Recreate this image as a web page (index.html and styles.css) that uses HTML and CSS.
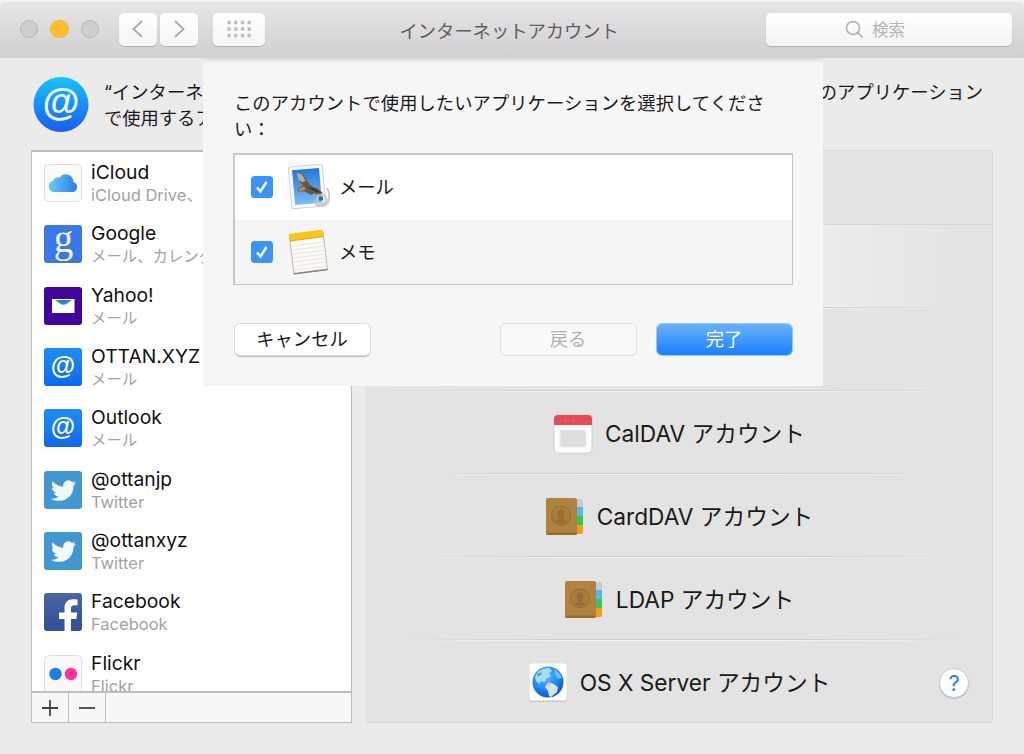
FILE: index.html
```html
<!DOCTYPE html>
<html lang="ja">
<head>
<meta charset="utf-8">
<title>インターネットアカウント</title>
<link rel="stylesheet" href="styles.css">
</head>
<body>
<svg width="0" height="0" class="defs">
  <defs>
    <linearGradient id="blue" x1="0" y1="0" x2="0" y2="1"><stop offset="0" stop-color="#14c4fb"/><stop offset="1" stop-color="#1c5cf0"/></linearGradient>
    <linearGradient id="mail" x1="0" y1="0" x2="0" y2="1"><stop offset="0" stop-color="#1c8df6"/><stop offset="1" stop-color="#1068ee"/></linearGradient>
    <linearGradient id="cloud"><stop offset="0" stop-color="#6cc8f8"/><stop offset="1" stop-color="#2a7fe6"/></linearGradient>
    <linearGradient id="sky" x1="0" y1="0" x2="0" y2="1"><stop offset="0" stop-color="#2176d8"/><stop offset="1" stop-color="#7dbdf0"/></linearGradient>
    <linearGradient id="fb" x1="0" y1="0" x2="0" y2="1"><stop offset="0" stop-color="#4a65a3"/><stop offset="1" stop-color="#2f4f97"/></linearGradient>
    <radialGradient id="sea" cx=".4" cy=".3" r=".75"><stop offset="0" stop-color="#5cc4ff"/><stop offset=".6" stop-color="#1b86ee"/><stop offset="1" stop-color="#0b50bd"/></radialGradient>
    <symbol id="bird" viewBox="0 0 24 24"><path d="M23.6 4.9c-.8.4-1.7.6-2.7.7 1-.6 1.700-1.500 2.100-2.600-.9.5-1.900.9-3 1.200A4.800 4.800 0 0 0 11.800 8.500C7.900 8.300 4.400 6.400 2 3.500c-1.200 2.100-.7 5 1.500 6.400-.8 0-1.500-.2-2.200-.6 0 2.300 1.600 4.300 3.900 4.800-.7.200-1.400.2-2.100.1.600 1.900 2.400 3.300 4.500 3.300A9.700 9.700 0 0 1 .5 19.500C8.700 24.500 21.300 20 21.300 7.500c.9-.7 1.700-1.600 2.300-2.600z"/></symbol>
    <symbol id="book" viewBox="0 0 40 40">
      <rect x="28" y="2" width="10" height="35" rx="2" fill="#c9c9cc"/>
      <path d="M30 10h8v9h-8z" fill="#51b9f0"/><path d="M30 19h8v9h-8z" fill="#38c65a"/><path d="M30 28h8v7q0 2-2 2h-6z" fill="#f39c16"/>
      <rect x="1" y="1" width="31" height="37" rx="2" fill="#b08240"/><path d="M1 35.500h31v.5q0 2-2 2H3q-2 0-2-2z" fill="#9a6c2c"/>
      <circle cx="16" cy="18.500" r="9.500" fill="#aa7c3b" stroke="#946b2e" stroke-width="1"/>
      <path d="M16 12.500c4.500 0 4 6 2 8 0 2 2 2.500 4 4q-6 4-12 0c2-1.500 4-2 4-4-2-2-2.500-8 2-8z" fill="#976e33"/>
    </symbol>
  </defs>
</svg>
<div class="window">
  <header class="titlebar">
    <div class="lights"><i></i><i class="amber"></i><i></i></div>
    <div class="nav">
      <button class="tool"><svg width="16" height="20" viewBox="0 0 16 20"><path d="M12 2 3.500 10l8.500 8" /></svg></button>
      <button class="tool"><svg width="16" height="20" viewBox="0 0 16 20"><path d="M4 2l8.500 8L4 18" /></svg></button>
    </div>
    <button class="tool grid"><svg width="24" height="18" viewBox="0 0 24 18"><path d="M.5 2.500h24M.5 9h24M.5 15.500h24" class="dots"/></svg></button>
    <h1>インターネットアカウント</h1>
    <div class="search"><svg width="19" height="19" viewBox="0 0 19 19"><circle cx="8" cy="8" r="6.500"/><path d="m12.700 12.700 5 4.800"/></svg><span>検索</span></div>
  </header>

  <main class="content">
    <section class="intro">
      <svg class="at" width="56" height="56" viewBox="0 0 56 56"><circle cx="28" cy="27.500" r="27.500" fill="url(#blue)"/><text x="28" y="37.500" text-anchor="middle">@</text></svg>
      <div class="intro-text">
        <div class="line"><span>“インターネッ</span><span>のアプリケーション</span></div>
        <div class="line">で使用するア</div>
      </div>
    </section>
    <div class="columns">
      <aside class="accounts">
        <ul>
          <li><svg class="tile" viewBox="0 0 38 38"><rect x=".5" y=".5" width="37" height="37" rx="4" fill="#fbfbfb" stroke="#dedede"/><path d="M10 28a5.600 5.600 0 0 1-1-11 5.300 5.300 0 0 1 6.500-3.500 7.800 7.800 0 0 1 14 4.500A5.200 5.200 0 0 1 29 28z" fill="url(#cloud)"/></svg><p><b>iCloud</b><small class="latin">iCloud Drive、</small></p></li>
          <li><svg class="tile" viewBox="0 0 38 38"><rect width="38" height="38" rx="3" fill="#3b78e7"/><text x="19.500" y="27" class="g" text-anchor="middle">g</text></svg><p><b>Google</b><small>メール、カレンダ</small></p></li>
          <li><svg class="tile" viewBox="0 0 38 38"><rect width="38" height="38" rx="3" fill="#42059c"/><path d="M8 12h22.500v14H8z" fill="#fff"/><path d="M11 13h17l-5 3.500q-3.500 2.500-7 0z" fill="#2c86c8"/></svg><p><b>Yahoo!</b><small>メール</small></p></li>
          <li><svg class="tile" viewBox="0 0 38 38"><rect width="38" height="38" rx="3" fill="url(#mail)"/><text x="19" y="25.500" class="a" text-anchor="middle">@</text></svg><p><b>OTTAN.XYZ</b><small>メール</small></p></li>
          <li><svg class="tile" viewBox="0 0 38 38"><rect width="38" height="38" rx="3" fill="url(#mail)"/><text x="19" y="25.500" class="a" text-anchor="middle">@</text></svg><p><b>Outlook</b><small>メール</small></p></li>
          <li><svg class="tile" viewBox="0 0 38 38"><rect width="38" height="38" rx="3" fill="#4296d2"/><use href="#bird" x="6.500" y="6.500" width="26" height="26" fill="#f2f7fb"/></svg><p><b>@ottanjp</b><small class="latin">Twitter</small></p></li>
          <li><svg class="tile" viewBox="0 0 38 38"><rect width="38" height="38" rx="3" fill="#4296d2"/><use href="#bird" x="6.500" y="6.500" width="26" height="26" fill="#f2f7fb"/></svg><p><b>@ottanxyz</b><small class="latin">Twitter</small></p></li>
          <li><svg class="tile" viewBox="0 0 38 38"><rect width="38" height="38" rx="3" fill="url(#fb)"/><path d="M20.500 38V26H15v-6.500h5.500V15c0-6 3.500-8.800 8.500-8.800 2 0 3.600.1 4.500.3v5.700h-3.300c-2.200 0-3.200 1.200-3.200 3.200v4.100h6.200L32.300 26H27v12z" fill="#fff"/></svg><p><b>Facebook</b><small class="latin">Facebook</small></p></li>
          <li><svg class="tile" viewBox="0 0 38 38"><rect x=".5" y=".5" width="37" height="37" rx="4" fill="#fafafa" stroke="#dedede"/><circle cx="11.500" cy="19" r="6.200" fill="#1a7fe0"/><circle cx="27" cy="19" r="6.200" fill="#ff3399"/></svg><p><b>Flickr</b><small class="latin">Flickr</small></p></li>
        </ul>
        <div class="tools"><span><svg width="18" height="18" viewBox="0 0 18 18"><path d="M9 1v16M1 9h16"/></svg></span><span><svg width="18" height="18" viewBox="0 0 18 18"><path d="M1 9h16"/></svg></span></div>
      </aside>
      <section class="providers">
        <div class="row first"></div>
        <div class="row lit"></div>
        <div class="row"></div>
        <div class="row"><svg width="40" height="40" viewBox="0 0 40 40"><rect x="1" y=".8" width="38" height="38.400" rx="4" fill="#fdfdfd" stroke="#cfcfcf"/><path d="M1 11V5q0-4 4-4h30q4 0 4 4v6z" fill="#e24c52"/><rect x="7" y="16" width="26" height="17" fill="#dedede" stroke="#eee"/><path d="M12 7h1m7 0h1" stroke="#f08c8c" stroke-width="1.500"/></svg><span>CalDAV アカウント</span></div>
        <div class="row"><svg width="40" height="40"><use href="#book"/></svg><span>CardDAV アカウント</span></div>
        <div class="row"><svg width="40" height="40"><use href="#book"/></svg><span>LDAP アカウント</span></div>
        <div class="row"><svg width="40" height="40" viewBox="0 0 40 40"><rect x="1.500" y="2" width="37" height="37" rx="3" fill="#c8c8c8"/><rect x="1.500" y=".5" width="37" height="37" rx="3" fill="#fff"/><circle cx="20" cy="19" r="15.500" fill="url(#sea)"/><path d="M9 10q5-5 12-5l3 3-3 2 2 3-5 3-1 3-4-1-2 3-3-3-1-4z" fill="#a9dafa"/><path d="M19 21l5-1 6 4-1 5-6 5-2-1-1-5-3-4z" fill="#cfe4f5"/><path d="M26 6q6 3 8 9l-4 1-3-4z" fill="#6bbdf3"/><circle cx="21" cy="21" r="1.800" fill="#f4c486"/><path d="M9 11l4-2 1 2-4 3z" fill="#3fc281"/></svg><span>OS X Server アカウント</span><button class="help">?</button></div>
      </section>
    </div>
  </main>

  <div class="sheet">
    <p class="prompt">このアカウントで使用したいアプリケーションを選択してください：</p>
    <div class="apps">
      <label><svg class="check" viewBox="0 0 22 22"><rect width="22" height="22" rx="3.500"/><path d="M6 11.500l3.500 4L15.500 6"/></svg>
        <svg width="46" height="48" viewBox="0 0 46 48"><g transform="rotate(-5 20 23)"><rect x="3" y="2.500" width="34" height="42" rx="1.500" fill="#f8f8f8" stroke="#d2d2d2"/><rect x="6.500" y="6" width="27" height="35" fill="url(#sky)"/><path d="M11 9l6 2 4 8 3 4 7 4 4 4-2 3-6-3-4 1-6-4-6 0-1-3 6-3-3-4z" fill="#6b563f"/><path d="M11 9l5 2 3 7-3 1-4-3z" fill="#b9ab9b"/><path d="M20 24l7 2 6 5-6-2z" fill="#3b322c"/><path d="M11 25l6-2 2 3-7 2z" fill="#b18c55"/></g><g fill="none" stroke="#c3c9ce" stroke-width="2" opacity=".9"><path d="M40 25q5 10-1 15-5 4-10 1"/><path d="M27 38q3 6 9 5t6-8"/><circle cx="34.500" cy="36" r="4.500"/></g><rect x="32" y="33.500" width="4" height="4" fill="#2f6da4"/></svg><span>メール</span></label>
      <label><svg class="check" viewBox="0 0 22 22"><rect width="22" height="22" rx="3.500"/><path d="M6 11.500l3.500 4L15.500 6"/></svg>
        <svg width="46" height="48" viewBox="0 0 46 48"><path d="M2.500 8 36 4l4.500 37.500L7 46z" fill="#fcfbf9" stroke="#c4b5a0"/><path d="M1.500 6 35.500 1.500l1 7L3 13z" fill="#fbc619"/><path d="M3 13l33.500-4.500" stroke="#e0a51a"/><path d="M5 18l32-4M5.500 22l32-4M6 26l32-4M6.500 30l32-4M7 34l32-4M7.500 38l32-4M8 42l32-4" stroke="#e9e6e1"/><path d="M7 45.800l33.500-4.300" stroke="#8d8276" stroke-width="1.500"/></svg><span>メモ</span></label>
    </div>
    <div class="buttons">
      <button class="btn">キャンセル</button>
      <span class="spacer"></span>
      <button class="btn disabled">戻る</button>
      <button class="btn primary">完了</button>
    </div>
  </div>
</div>
</body>
</html>
```
FILE: styles.css
```css
* { box-sizing: border-box; }
body {
  margin: 0;
  background: #f3f2f4;
  font-family: Inter, "Noto Sans CJK JP", sans-serif;
  font-size: 18.3px;
  color: #1a1a1a;
}
.defs { position: absolute; }
button { font: inherit; color: inherit; padding: 0; border: 0; }
p, h1, ul { margin: 0; padding: 0; }
.window {
  position: relative;
  width: 1024px;
  height: 754px;
  padding-top: 2px;
  overflow: hidden;
  display: flex;
  flex-direction: column;
}
.titlebar {
  height: 56px;
  flex: none;
  display: flex;
  align-items: center;
  padding: 0 12px 2px 19.500px;
  background: linear-gradient(#e7e5e7, #d1cfd1);
  border-radius: 6px 6px 0 0;
}
.lights { display: flex; gap: 12px; }
.lights i { width: 18.500px; height: 18.500px; border-radius: 50%; background: #cfcdcf; border: 1px solid #b9b8b9; }
.lights .amber { background: #fdbd2e; border-color: #f9b82d; }
.nav { display: flex; gap: 3px; margin-left: 20px; }
.tool {
  width: 38px;
  height: 33px;
  border-radius: 5px;
  background: linear-gradient(#fff, #f5f5f5);
  box-shadow: 0 1px 1px #aeaeae;
  display: flex;
  align-items: center;
  justify-content: center;
}
.tool path { fill: none; stroke: #aaa; stroke-width: 1.800; }
.tool .dots { stroke: #bdbdbd; stroke-width: 3.500; stroke-dasharray: 3.200 3.500; }
.grid { width: 52px; margin-left: 14.500px; }
.titlebar h1 { flex: 1; margin-left: 135px; font-size: 18.300px; font-weight: 400; color: #5d5d5f; line-height: 26px; padding-top: 3px; }
.search {
  width: 246px;
  height: 33px;
  border-radius: 5px;
  background: linear-gradient(#fff, #f3f3f3);
  box-shadow: 0 1px 1px #aeaeae;
  display: flex;
  align-items: center;
  justify-content: center;
  gap: 8px;
  color: #b5b5b5;
  font-size: 16.500px;
  padding-right: 28px;
}
.search svg { fill: none; stroke: #b0b0b0; stroke-width: 1.600; }

.content { flex: 1; background: #ebebeb; padding: 19px 31px 31px; display: flex; flex-direction: column; }
.intro { display: flex; height: 73px; padding-left: 2px; }
.at text { font: bold 38px "Liberation Sans", sans-serif; fill: #eef5ff; }
.intro-text { flex: 1; margin-left: 15px; padding-right: 10px; padding-top: 2px; }
.line { display: flex; justify-content: space-between; line-height: 26px; }
.columns { display: flex; gap: 13px; height: 573px; }
.accounts { width: 321px; border: 1px solid #bdbdbd; border-top-width: 2px; background: #fff; display: flex; flex-direction: column; }
.accounts ul { list-style: none; height: 539px; overflow: hidden; }
.accounts li { display: flex; height: 61.330px; padding: 12px 0 0 11.500px; gap: 9.500px; }
.tile { width: 38px; height: 38px; flex: none; }
.tile .g { font: 39px "Liberation Serif", serif; fill: #f3f7ff; }
.tile .a { font: bold 25px "Liberation Sans", sans-serif; fill: #fff; }
.accounts p { display: flex; flex-direction: column; margin-top: -4px; white-space: nowrap; }
.accounts b { font-weight: 400; font-size: 19.300px; line-height: 25px; color: #111; }
.accounts small { font-size: 15.400px; line-height: 21px; color: #a2a2a2; }
.accounts .latin { font-size: 16.500px; }
.tools { flex: 1; display: flex; background: #f8f8f8; border-top: 2px solid #bdbdbd; }
.tools span { width: 37px; border-right: 1px solid #bdbdbd; display: flex; align-items: center; justify-content: center; }
.tools path { stroke: #444; stroke-width: 1.800; }

.providers { flex: 1; background: #e3e3e3; border: 1px solid #dadada; border-left-color: #e3e3e3; border-radius: 3px; }
.row {
  position: relative;
  height: 83px;
  padding-top: 4px;
  display: flex;
  align-items: center;
  justify-content: center;
  gap: 12px;
  font-size: 22.700px;
  background: linear-gradient(90deg, transparent 4%, #ccc 35%, #ccc 65%, transparent 97%) 0 0 / 100% 1px no-repeat,
              linear-gradient(90deg, transparent 4%, #f5f5f5 35%, #f5f5f5 65%, transparent 97%) 0 1px / 100% 1px no-repeat;
}
.row.first { height: 73px; background: none; }
.row.lit { background: linear-gradient(90deg, transparent, #ededed 50%, #ededed 72%, transparent 96%); border-top: 1px solid #d6d6d6; }
.row svg { flex: none; }
.row span { line-height: 30px; white-space: nowrap; }
.help {
  position: absolute;
  right: 23px;
  top: 29px;
  width: 30px;
  height: 30px;
  border-radius: 50%;
  background: #fff;
  border: 1px solid #ccc;
  box-shadow: 0 1px 1px #bbb;
  color: #1f7cf5;
  font-size: 22px;
  line-height: 28px;
}

.sheet {
  position: absolute;
  left: 203px;
  top: 58px;
  width: 620px;
  height: 328px;
  background: linear-gradient(#d9d9d9, #f6f6f6 5px);
  padding: 32px 30px 30px;
  display: flex;
  flex-direction: column;
}
.prompt { line-height: 26px; width: 540px; padding-left: 1px; letter-spacing: .07px; }
.apps { margin-top: 11px; height: 132px; border: 2px solid #c6c6c6; border-bottom-width: 1px; border-right-width: 1px; display: flex; flex-direction: column; }
.apps label { flex: 1; display: flex; align-items: center; background: #fff; padding-left: 16px; }
.apps label + label { background: #f5f5f5; }
.check { width: 22px; height: 22px; margin-right: 14px; }
.check rect { fill: #3a93f8; }
.check path { fill: none; stroke: #fff; stroke-width: 2.400; }
.apps span { margin-left: 6px; line-height: 26px; }
.buttons { display: flex; gap: 21px; margin-top: 39px; padding: 0 1.500px; }
.spacer { flex: 1; }
.btn { width: 135px; height: 30.500px; border-radius: 5px; background: #fff; box-shadow: 0 0 0 1px #dcdcdc, 0 1.500px 1px #b9b9b9; line-height: 30px; }
.btn.disabled { background: #f9f9f9; color: #b1b1b1; box-shadow: 0 0 0 1px #e3e3e3; }
.btn.primary { background: linear-gradient(#6ab2fb, #1a80fc); color: #fff; box-shadow: 0 0 0 1px #9cc5fb; }
```
